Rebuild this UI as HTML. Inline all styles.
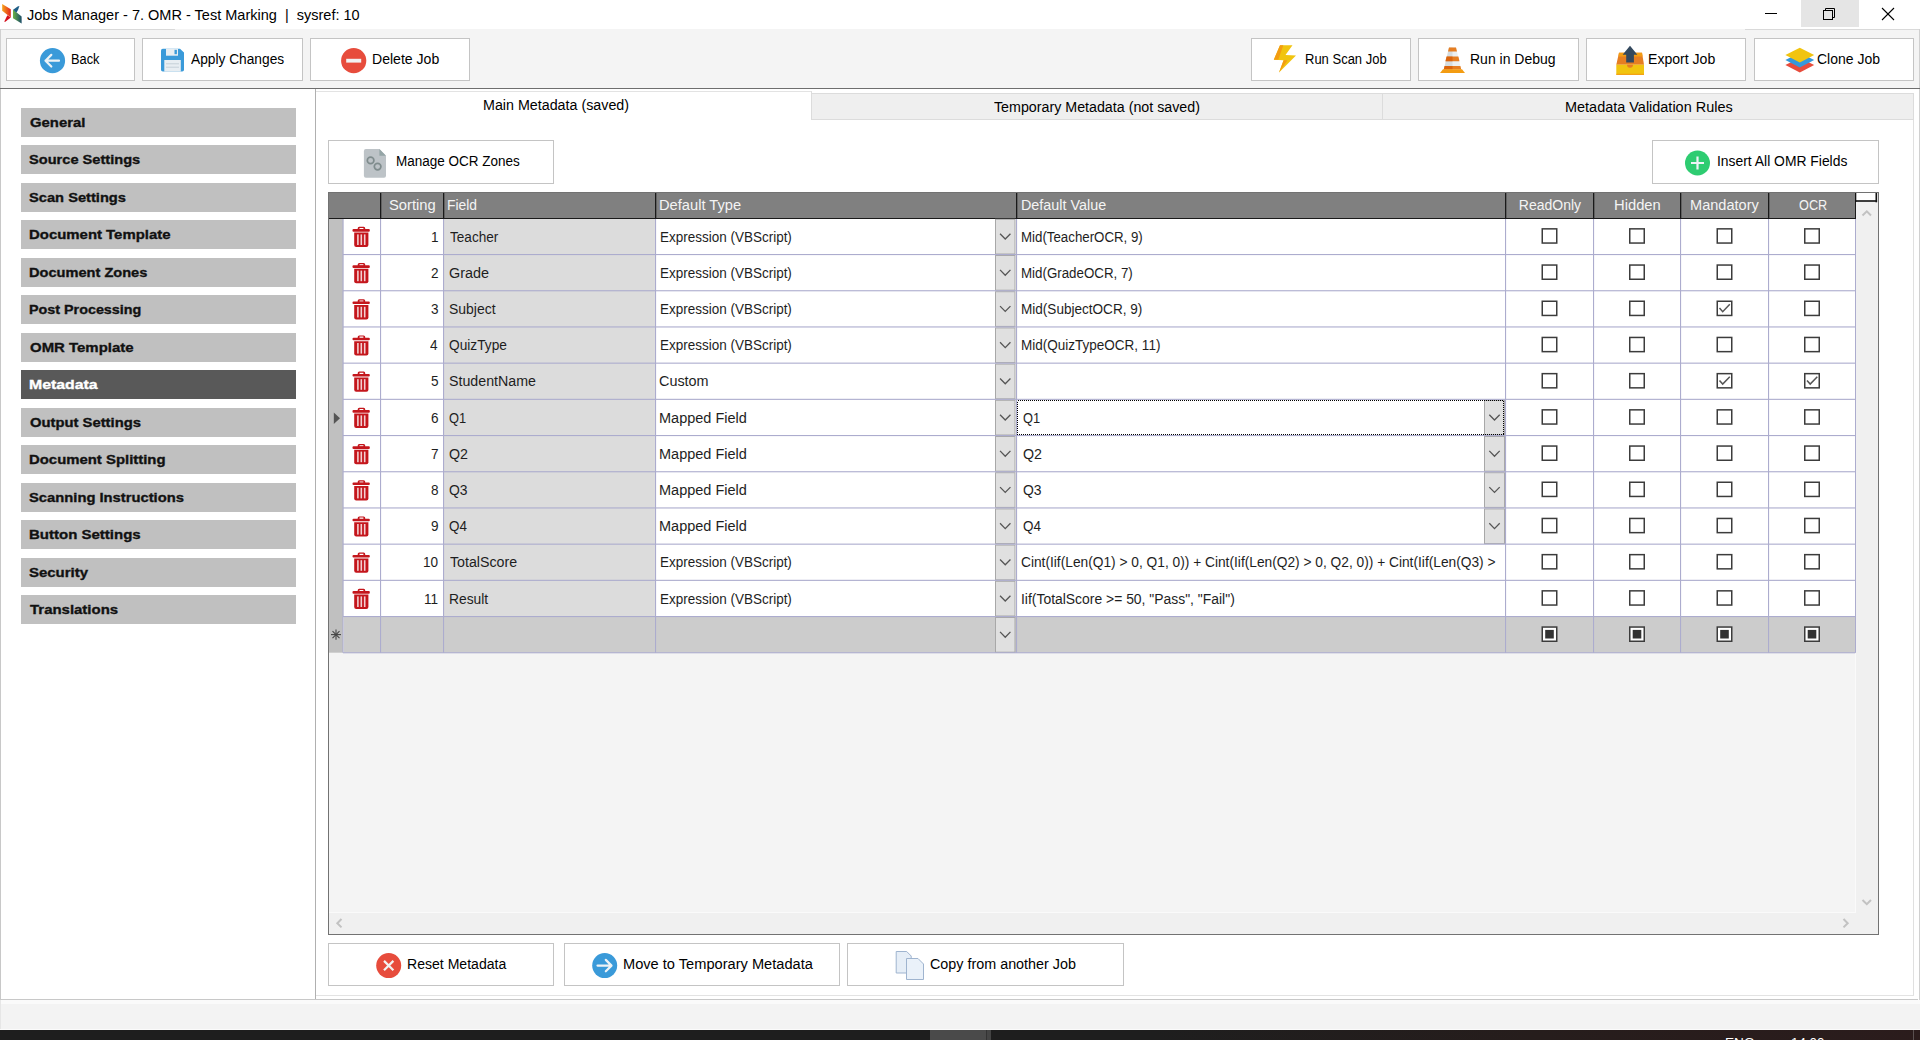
<!DOCTYPE html>
<html><head><meta charset="utf-8"><title>Jobs Manager</title>
<style>html,body{margin:0;padding:0;width:1920px;height:1040px;overflow:hidden;background:#fff;font-family:"Liberation Sans", sans-serif;}</style>
</head><body>
<div style="position:absolute;left:0px;top:0px;width:1920px;height:29px;background:#fff"></div>
<svg style="position:absolute;left:0;top:0" width="26" height="28" viewBox="0 0 26 28">
<defs><linearGradient id="lg1" x1="0" y1="0" x2="1" y2="0"><stop offset="0" stop-color="#f6a31c"/><stop offset="1" stop-color="#e3261f"/></linearGradient>
<linearGradient id="lg2" x1="0" y1="0" x2="1" y2="0"><stop offset="0" stop-color="#6cb246"/><stop offset="1" stop-color="#1b4d68"/></linearGradient></defs>
<polygon points="2.2,4 10.8,9.2 10.8,17.5 2.2,10.8" fill="url(#lg1)"/>
<polygon points="7.4,15.2 10.8,17.5 5,22 4.3,21.4" fill="#d40f1c"/>
<polygon points="13,9.5 21.6,16.4 21.6,23.6 13,18.3" fill="url(#lg2)"/>
<polygon points="13.2,9.8 17.6,6.4 19.4,6 18.2,9.5 16.6,12.6 14.8,11.2" fill="#1e5d86"/>
</svg>
<div style="position:absolute;left:1801px;top:0px;width:58px;height:27px;background:#e5e5e5"></div>
<svg style="position:absolute;left:1740px;top:0" width="180" height="28" viewBox="0 0 180 28">
<line x1="25" y1="13.5" x2="37" y2="13.5" stroke="#000" stroke-width="1"/>
<rect x="83.5" y="10.5" width="9" height="9" fill="none" stroke="#000" stroke-width="1"/>
<polyline points="85.5,10.5 85.5,8.5 94.5,8.5 94.5,17.5 92.5,17.5" fill="none" stroke="#000" stroke-width="1"/>
<line x1="142" y1="8" x2="154" y2="20" stroke="#000" stroke-width="1.1"/>
<line x1="154" y1="8" x2="142" y2="20" stroke="#000" stroke-width="1.1"/>
</svg>
<div style="position:absolute;left:0px;top:29px;width:1920px;height:59px;background:#f4f4f4"></div>
<div style="position:absolute;left:0px;top:29px;width:175px;height:1px;background:#d9d9d9"></div>
<div style="position:absolute;left:1745px;top:29px;width:175px;height:1px;background:#d9d9d9"></div>
<div style="position:absolute;left:0px;top:29px;width:1px;height:59px;background:#d0d0d0"></div>
<div style="position:absolute;left:1919px;top:29px;width:1px;height:59px;background:#d0d0d0"></div>
<div style="position:absolute;left:0px;top:88px;width:1920px;height:1px;background:#6e6e6e"></div>
<div style="position:absolute;left:6px;top:38px;width:129px;height:43px;background:#fff;border:1px solid #c4c4c4;box-sizing:border-box"></div>
<div style="position:absolute;left:142px;top:38px;width:161px;height:43px;background:#fff;border:1px solid #c4c4c4;box-sizing:border-box"></div>
<div style="position:absolute;left:310px;top:38px;width:160px;height:43px;background:#fff;border:1px solid #c4c4c4;box-sizing:border-box"></div>
<div style="position:absolute;left:1251px;top:38px;width:160px;height:43px;background:#fff;border:1px solid #c4c4c4;box-sizing:border-box"></div>
<div style="position:absolute;left:1418px;top:38px;width:161px;height:43px;background:#fff;border:1px solid #c4c4c4;box-sizing:border-box"></div>
<div style="position:absolute;left:1586px;top:38px;width:160px;height:43px;background:#fff;border:1px solid #c4c4c4;box-sizing:border-box"></div>
<div style="position:absolute;left:1754px;top:38px;width:160px;height:43px;background:#fff;border:1px solid #c4c4c4;box-sizing:border-box"></div>

<svg style="position:absolute;left:0;top:0" width="1920" height="1040" viewBox="0 0 1920 1040">
<!-- back -->
<circle cx="52.5" cy="60.7" r="12.6" fill="#3a9ad9"/>
<path d="M45.5,60.7 H59 M51.3,54.9 L45.5,60.7 L51.3,66.5" fill="none" stroke="#eef3f6" stroke-width="2.2" stroke-linecap="round" stroke-linejoin="round"/>
<!-- floppy -->
<path d="M161,50.5 a1.8,1.8 0 0 1 1.8,-1.8 H180 L184,52.5 V69.8 a1.8,1.8 0 0 1 -1.8,1.8 H162.8 a1.8,1.8 0 0 1 -1.8,-1.8 Z" fill="#3a9ad9"/>
<rect x="166" y="48.7" width="12" height="7" fill="#e8eef2"/>
<rect x="174.5" y="49.8" width="2.4" height="4.4" fill="#3a9ad9"/>
<rect x="164.3" y="60" width="16.5" height="11.6" fill="#e8eef2"/>
<line x1="166" y1="63.8" x2="179" y2="63.8" stroke="#c5d0d8" stroke-width="1"/>
<line x1="166" y1="67.2" x2="179" y2="67.2" stroke="#c5d0d8" stroke-width="1"/>
<!-- delete -->
<circle cx="353.7" cy="60.7" r="12.6" fill="#e74c3c"/>
<rect x="346.2" y="58.8" width="15" height="3.8" fill="#f2f2f2"/>
<!-- lightning -->
<polygon points="1280,45.2 1292.5,45.2 1285.5,54.9 1296,55.4 1279,72.5 1283.6,60.2 1273.8,59.8" fill="#f1c40f"/>
<polygon points="1280,45.2 1283.3,45.2 1278.3,59.8 1273.8,59.8" fill="#f39c12"/>
<polygon points="1283.6,60.2 1287.5,60.2 1279,72.5" fill="#f39c12"/>
<!-- cone -->
<polygon points="1449,47.5 1456,47.5 1461.2,69.5 1443.8,69.5" fill="#ecf0f1"/>
<polygon points="1449,47.5 1452.5,47.5 1452.5,69.5 1443.8,69.5" fill="#bdc3c7" opacity="0.45"/>
<polygon points="1449,47.5 1456,47.5 1457,51.5 1448,51.5" fill="#e67e22"/>
<polygon points="1446.6,56.6 1458.4,56.6 1459.5,61.3 1445.5,61.3" fill="#e67e22"/>
<polygon points="1444.6,66 1460.4,66 1461.2,69.5 1443.8,69.5" fill="#e67e22"/>
<polygon points="1446.6,56.6 1452.5,56.6 1452.5,61.3 1445.5,61.3" fill="#d35400" opacity="0.6"/>
<polygon points="1444.6,66 1452.5,66 1452.5,69.5 1443.8,69.5" fill="#d35400" opacity="0.6"/>
<polygon points="1443,69.3 1462,69.3 1465,73 1440,73" fill="#f39c12"/>
<!-- export -->
<polygon points="1619,52.8 1642,52.8 1644,64.7 1616.3,64.7" fill="#e67e22"/>
<polygon points="1619,52.8 1642,52.8 1642.5,56.5 1618.5,56.5" fill="#f39c12"/>
<rect x="1616.3" y="64.7" width="27.7" height="10.1" fill="#f1c40f"/>
<path d="M1627,64.7 a3,3 0 0 0 6,0 Z" fill="#e67e22"/>
<rect x="1616.3" y="73.8" width="27.7" height="1.1" fill="#f39c12"/>
<polygon points="1630,45.8 1637.4,54.7 1633.9,54.7 1633.9,62.5 1626.2,62.5 1626.2,54.7 1622.6,54.7" fill="#34495e"/>
<!-- clone -->
<polygon points="1785.4,65 1799.8,57.7 1814.2,65 1799.8,72.6" fill="#e74c3c"/>
<polygon points="1785.4,60 1799.8,52.7 1814.2,60 1799.8,67.5" fill="#3498db"/>
<polygon points="1785.4,55.1 1799.8,47.7 1814.2,55.1 1799.8,62.5" fill="#f1c40f"/>
</svg>
<div style="position:absolute;left:0px;top:89px;width:316px;height:911px;background:#fff"></div>
<div style="position:absolute;left:0px;top:89px;width:1px;height:911px;background:#c8c8c8"></div>
<div style="position:absolute;left:315px;top:89px;width:1px;height:911px;background:#b0b0b0"></div>
<div style="position:absolute;left:316px;top:89px;width:1604px;height:911px;background:#fff"></div>
<div style="position:absolute;left:1919px;top:89px;width:1px;height:911px;background:#d0d0d0"></div>
<div style="position:absolute;left:21px;top:108px;width:275px;height:29px;background:#c0c0c0"></div>
<div style="position:absolute;left:21px;top:145px;width:275px;height:29px;background:#c0c0c0"></div>
<div style="position:absolute;left:21px;top:183px;width:275px;height:29px;background:#c0c0c0"></div>
<div style="position:absolute;left:21px;top:220px;width:275px;height:29px;background:#c0c0c0"></div>
<div style="position:absolute;left:21px;top:258px;width:275px;height:29px;background:#c0c0c0"></div>
<div style="position:absolute;left:21px;top:295px;width:275px;height:29px;background:#c0c0c0"></div>
<div style="position:absolute;left:21px;top:333px;width:275px;height:29px;background:#c0c0c0"></div>
<div style="position:absolute;left:21px;top:370px;width:275px;height:29px;background:#595959"></div>
<div style="position:absolute;left:21px;top:408px;width:275px;height:29px;background:#c0c0c0"></div>
<div style="position:absolute;left:21px;top:445px;width:275px;height:29px;background:#c0c0c0"></div>
<div style="position:absolute;left:21px;top:483px;width:275px;height:29px;background:#c0c0c0"></div>
<div style="position:absolute;left:21px;top:520px;width:275px;height:29px;background:#c0c0c0"></div>
<div style="position:absolute;left:21px;top:558px;width:275px;height:29px;background:#c0c0c0"></div>
<div style="position:absolute;left:21px;top:595px;width:275px;height:29px;background:#c0c0c0"></div>
<div style="position:absolute;left:316px;top:91px;width:496px;height:29px;background:#fff;border-top:1px solid #e3e3e3;border-right:1px solid #dcdcdc;box-sizing:border-box"></div>
<div style="position:absolute;left:811px;top:93px;width:1103px;height:27px;background:#efefef;border:1px solid #dcdcdc;border-right:none;box-sizing:border-box"></div>
<div style="position:absolute;left:1382px;top:93px;width:1px;height:27px;background:#dcdcdc"></div>
<div style="position:absolute;left:1913px;top:93px;width:1px;height:27px;background:#dcdcdc"></div>
<div style="position:absolute;left:1913px;top:120px;width:1px;height:876px;background:#e0e0e0"></div>
<div style="position:absolute;left:316px;top:995px;width:1598px;height:1px;background:#e3e3e3"></div>
<div style="position:absolute;left:0px;top:999px;width:1918px;height:1px;background:#c8c8c8"></div>
<div style="position:absolute;left:0px;top:1000px;width:1920px;height:30px;background:#f3f3f3"></div>
<div style="position:absolute;left:0px;top:1000px;width:1920px;height:4px;background:#fafafa"></div>
<div style="position:absolute;left:0px;top:1000px;width:1px;height:30px;background:#e6e6e6"></div>
<div style="position:absolute;left:0px;top:1029px;width:1920px;height:1px;background:#fbfbfb"></div>
<div style="position:absolute;left:0px;top:1030px;width:1920px;height:10px;background:linear-gradient(90deg,#1e1e1e 0%,#1e1e1e 60%,#261d1c 80%,#2b1c1c 100%)"></div>
<div style="position:absolute;left:1913px;top:1030px;width:1px;height:10px;background:#5a5050"></div>
<div style="position:absolute;left:930px;top:1030px;width:56px;height:10px;background:#4a4a4a"></div>
<div style="position:absolute;left:986px;top:1030px;width:1px;height:10px;background:#333"></div>
<div style="position:absolute;left:987px;top:1030px;width:4px;height:10px;background:#444"></div>
<div style="position:absolute;left:328px;top:140px;width:226px;height:44px;background:#fff;border:1px solid #c4c4c4;box-sizing:border-box"></div>
<div style="position:absolute;left:1652px;top:140px;width:227px;height:44px;background:#fff;border:1px solid #c4c4c4;box-sizing:border-box"></div>
<div style="position:absolute;left:328px;top:943px;width:226px;height:43px;background:#fff;border:1px solid #c4c4c4;box-sizing:border-box"></div>
<div style="position:absolute;left:564px;top:943px;width:276px;height:43px;background:#fff;border:1px solid #c4c4c4;box-sizing:border-box"></div>
<div style="position:absolute;left:847px;top:943px;width:277px;height:43px;background:#fff;border:1px solid #c4c4c4;box-sizing:border-box"></div>
<div style="position:absolute;left:328px;top:192px;width:1550px;height:742px;background:#f4f4f4"></div>
<svg style="position:absolute;left:0;top:0" width="1920" height="1040" viewBox="0 0 1920 1040">
<rect x="344" y="219" width="1511" height="397.5" fill="#fff"/>
<rect x="444" y="219" width="211" height="397.5" fill="#dcdcdc"/>
<rect x="329" y="219" width="14" height="433.70000000000005" fill="#c0c0c0"/>
<rect x="344" y="616.5" width="1511.5" height="36.2" fill="#cccccc"/>
<rect x="329" y="193" width="1527" height="25" fill="#808080"/>
<rect x="329" y="218" width="1527" height="1" fill="#1a1a1a"/>
<rect x="380.0" y="193" width="1.3" height="25" fill="#1a1a1a"/>
<rect x="443.0" y="193" width="1.3" height="25" fill="#1a1a1a"/>
<rect x="655.0" y="193" width="1.3" height="25" fill="#1a1a1a"/>
<rect x="1016.0" y="193" width="1.3" height="25" fill="#1a1a1a"/>
<rect x="1505.0" y="193" width="1.3" height="25" fill="#1a1a1a"/>
<rect x="1593.0" y="193" width="1.3" height="25" fill="#1a1a1a"/>
<rect x="1680.0" y="193" width="1.3" height="25" fill="#1a1a1a"/>
<rect x="1768.0" y="193" width="1.3" height="25" fill="#1a1a1a"/>
<rect x="1855.0" y="193" width="1.3" height="25" fill="#1a1a1a"/>
<rect x="995.5" y="219.3" width="19.5" height="34.7" fill="#e0e0e0" stroke="#a8a8a8" stroke-width="1"/>
<polyline points="1000.05,233.70000000000002 1005.25,239.0 1010.45,233.70000000000002" fill="none" stroke="#555" stroke-width="1.3"/>
<rect x="995.5" y="255.5" width="19.5" height="34.7" fill="#e0e0e0" stroke="#a8a8a8" stroke-width="1"/>
<polyline points="1000.05,269.90000000000003 1005.25,275.20000000000005 1010.45,269.90000000000003" fill="none" stroke="#555" stroke-width="1.3"/>
<rect x="995.5" y="291.70000000000005" width="19.5" height="34.7" fill="#e0e0e0" stroke="#a8a8a8" stroke-width="1"/>
<polyline points="1000.05,306.1000000000001 1005.25,311.4000000000001 1010.45,306.1000000000001" fill="none" stroke="#555" stroke-width="1.3"/>
<rect x="995.5" y="327.90000000000003" width="19.5" height="34.7" fill="#e0e0e0" stroke="#a8a8a8" stroke-width="1"/>
<polyline points="1000.05,342.30000000000007 1005.25,347.6000000000001 1010.45,342.30000000000007" fill="none" stroke="#555" stroke-width="1.3"/>
<rect x="995.5" y="364.1" width="19.5" height="34.7" fill="#e0e0e0" stroke="#a8a8a8" stroke-width="1"/>
<polyline points="1000.05,378.50000000000006 1005.25,383.80000000000007 1010.45,378.50000000000006" fill="none" stroke="#555" stroke-width="1.3"/>
<rect x="995.5" y="400.3" width="19.5" height="34.7" fill="#e0e0e0" stroke="#a8a8a8" stroke-width="1"/>
<polyline points="1000.05,414.70000000000005 1005.25,420.00000000000006 1010.45,414.70000000000005" fill="none" stroke="#555" stroke-width="1.3"/>
<rect x="1484.5" y="400.3" width="20.0" height="34.7" fill="#e0e0e0" stroke="#a8a8a8" stroke-width="1"/>
<polyline points="1489.3,414.70000000000005 1494.5,420.00000000000006 1499.7,414.70000000000005" fill="none" stroke="#555" stroke-width="1.3"/>
<rect x="995.5" y="436.5" width="19.5" height="34.7" fill="#e0e0e0" stroke="#a8a8a8" stroke-width="1"/>
<polyline points="1000.05,450.90000000000003 1005.25,456.20000000000005 1010.45,450.90000000000003" fill="none" stroke="#555" stroke-width="1.3"/>
<rect x="1484.5" y="436.5" width="20.0" height="34.7" fill="#e0e0e0" stroke="#a8a8a8" stroke-width="1"/>
<polyline points="1489.3,450.90000000000003 1494.5,456.20000000000005 1499.7,450.90000000000003" fill="none" stroke="#555" stroke-width="1.3"/>
<rect x="995.5" y="472.70000000000005" width="19.5" height="34.7" fill="#e0e0e0" stroke="#a8a8a8" stroke-width="1"/>
<polyline points="1000.05,487.1000000000001 1005.25,492.4000000000001 1010.45,487.1000000000001" fill="none" stroke="#555" stroke-width="1.3"/>
<rect x="1484.5" y="472.70000000000005" width="20.0" height="34.7" fill="#e0e0e0" stroke="#a8a8a8" stroke-width="1"/>
<polyline points="1489.3,487.1000000000001 1494.5,492.4000000000001 1499.7,487.1000000000001" fill="none" stroke="#555" stroke-width="1.3"/>
<rect x="995.5" y="508.90000000000003" width="19.5" height="34.7" fill="#e0e0e0" stroke="#a8a8a8" stroke-width="1"/>
<polyline points="1000.05,523.3 1005.25,528.6 1010.45,523.3" fill="none" stroke="#555" stroke-width="1.3"/>
<rect x="1484.5" y="508.90000000000003" width="20.0" height="34.7" fill="#e0e0e0" stroke="#a8a8a8" stroke-width="1"/>
<polyline points="1489.3,523.3 1494.5,528.6 1499.7,523.3" fill="none" stroke="#555" stroke-width="1.3"/>
<rect x="995.5" y="545.1" width="19.5" height="34.7" fill="#e0e0e0" stroke="#a8a8a8" stroke-width="1"/>
<polyline points="1000.05,559.5 1005.25,564.8000000000001 1010.45,559.5" fill="none" stroke="#555" stroke-width="1.3"/>
<rect x="995.5" y="581.3" width="19.5" height="34.7" fill="#e0e0e0" stroke="#a8a8a8" stroke-width="1"/>
<polyline points="1000.05,595.6999999999999 1005.25,601.0 1010.45,595.6999999999999" fill="none" stroke="#555" stroke-width="1.3"/>
<rect x="995.5" y="617.5" width="19.5" height="34.7" fill="#e0e0e0" stroke="#a8a8a8" stroke-width="1"/>
<polyline points="1000.05,631.9 1005.25,637.2 1010.45,631.9" fill="none" stroke="#555" stroke-width="1.3"/>
<rect x="343" y="254.0" width="1512.5" height="1.1" fill="#acacce"/>
<rect x="343" y="290.20000000000005" width="1512.5" height="1.1" fill="#acacce"/>
<rect x="343" y="326.40000000000003" width="1512.5" height="1.1" fill="#acacce"/>
<rect x="343" y="362.6" width="1512.5" height="1.1" fill="#acacce"/>
<rect x="343" y="398.8" width="1512.5" height="1.1" fill="#acacce"/>
<rect x="343" y="435.0" width="1512.5" height="1.1" fill="#acacce"/>
<rect x="343" y="471.20000000000005" width="1512.5" height="1.1" fill="#acacce"/>
<rect x="343" y="507.40000000000003" width="1512.5" height="1.1" fill="#acacce"/>
<rect x="343" y="543.6" width="1512.5" height="1.1" fill="#acacce"/>
<rect x="343" y="579.8" width="1512.5" height="1.1" fill="#acacce"/>
<rect x="343" y="616.0" width="1512.5" height="1.1" fill="#acacce"/>
<rect x="343" y="652.2" width="1512.5" height="1.1" fill="#acacce"/>
<rect x="342.5" y="219" width="1.1" height="433.70000000000005" fill="#acacce"/>
<rect x="380.0" y="219" width="1.1" height="433.70000000000005" fill="#acacce"/>
<rect x="443.0" y="219" width="1.1" height="433.70000000000005" fill="#acacce"/>
<rect x="655.0" y="219" width="1.1" height="433.70000000000005" fill="#acacce"/>
<rect x="1016.0" y="219" width="1.1" height="433.70000000000005" fill="#acacce"/>
<rect x="1505.0" y="219" width="1.1" height="433.70000000000005" fill="#acacce"/>
<rect x="1593.0" y="219" width="1.1" height="433.70000000000005" fill="#acacce"/>
<rect x="1680.0" y="219" width="1.1" height="433.70000000000005" fill="#acacce"/>
<rect x="1768.0" y="219" width="1.1" height="433.70000000000005" fill="#acacce"/>
<rect x="1855.0" y="219" width="1.1" height="433.70000000000005" fill="#acacce"/>
<rect x="1542.25" y="228.85" width="14.5" height="14.2" fill="#fff" stroke="#3c3c3c" stroke-width="1.5"/>
<rect x="1629.75" y="228.85" width="14.5" height="14.2" fill="#fff" stroke="#3c3c3c" stroke-width="1.5"/>
<rect x="1717.25" y="228.85" width="14.5" height="14.2" fill="#fff" stroke="#3c3c3c" stroke-width="1.5"/>
<rect x="1804.75" y="228.85" width="14.5" height="14.2" fill="#fff" stroke="#3c3c3c" stroke-width="1.5"/>
<rect x="1542.25" y="265.05" width="14.5" height="14.2" fill="#fff" stroke="#3c3c3c" stroke-width="1.5"/>
<rect x="1629.75" y="265.05" width="14.5" height="14.2" fill="#fff" stroke="#3c3c3c" stroke-width="1.5"/>
<rect x="1717.25" y="265.05" width="14.5" height="14.2" fill="#fff" stroke="#3c3c3c" stroke-width="1.5"/>
<rect x="1804.75" y="265.05" width="14.5" height="14.2" fill="#fff" stroke="#3c3c3c" stroke-width="1.5"/>
<rect x="1542.25" y="301.25000000000006" width="14.5" height="14.2" fill="#fff" stroke="#3c3c3c" stroke-width="1.5"/>
<rect x="1629.75" y="301.25000000000006" width="14.5" height="14.2" fill="#fff" stroke="#3c3c3c" stroke-width="1.5"/>
<rect x="1717.25" y="301.25000000000006" width="14.5" height="14.2" fill="#fff" stroke="#3c3c3c" stroke-width="1.5"/>
<polyline points="1719.5,308.00000000000006 1722.7,311.70000000000005 1729.8,304.30000000000007" fill="none" stroke="#555" stroke-width="1.5"/>
<rect x="1804.75" y="301.25000000000006" width="14.5" height="14.2" fill="#fff" stroke="#3c3c3c" stroke-width="1.5"/>
<rect x="1542.25" y="337.45000000000005" width="14.5" height="14.2" fill="#fff" stroke="#3c3c3c" stroke-width="1.5"/>
<rect x="1629.75" y="337.45000000000005" width="14.5" height="14.2" fill="#fff" stroke="#3c3c3c" stroke-width="1.5"/>
<rect x="1717.25" y="337.45000000000005" width="14.5" height="14.2" fill="#fff" stroke="#3c3c3c" stroke-width="1.5"/>
<rect x="1804.75" y="337.45000000000005" width="14.5" height="14.2" fill="#fff" stroke="#3c3c3c" stroke-width="1.5"/>
<rect x="1542.25" y="373.65000000000003" width="14.5" height="14.2" fill="#fff" stroke="#3c3c3c" stroke-width="1.5"/>
<rect x="1629.75" y="373.65000000000003" width="14.5" height="14.2" fill="#fff" stroke="#3c3c3c" stroke-width="1.5"/>
<rect x="1717.25" y="373.65000000000003" width="14.5" height="14.2" fill="#fff" stroke="#3c3c3c" stroke-width="1.5"/>
<polyline points="1719.5,380.40000000000003 1722.7,384.1 1729.8,376.70000000000005" fill="none" stroke="#555" stroke-width="1.5"/>
<rect x="1804.75" y="373.65000000000003" width="14.5" height="14.2" fill="#fff" stroke="#3c3c3c" stroke-width="1.5"/>
<polyline points="1807.0,380.40000000000003 1810.2,384.1 1817.3,376.70000000000005" fill="none" stroke="#555" stroke-width="1.5"/>
<rect x="1542.25" y="409.85" width="14.5" height="14.2" fill="#fff" stroke="#3c3c3c" stroke-width="1.5"/>
<rect x="1629.75" y="409.85" width="14.5" height="14.2" fill="#fff" stroke="#3c3c3c" stroke-width="1.5"/>
<rect x="1717.25" y="409.85" width="14.5" height="14.2" fill="#fff" stroke="#3c3c3c" stroke-width="1.5"/>
<rect x="1804.75" y="409.85" width="14.5" height="14.2" fill="#fff" stroke="#3c3c3c" stroke-width="1.5"/>
<rect x="1542.25" y="446.05" width="14.5" height="14.2" fill="#fff" stroke="#3c3c3c" stroke-width="1.5"/>
<rect x="1629.75" y="446.05" width="14.5" height="14.2" fill="#fff" stroke="#3c3c3c" stroke-width="1.5"/>
<rect x="1717.25" y="446.05" width="14.5" height="14.2" fill="#fff" stroke="#3c3c3c" stroke-width="1.5"/>
<rect x="1804.75" y="446.05" width="14.5" height="14.2" fill="#fff" stroke="#3c3c3c" stroke-width="1.5"/>
<rect x="1542.25" y="482.25000000000006" width="14.5" height="14.2" fill="#fff" stroke="#3c3c3c" stroke-width="1.5"/>
<rect x="1629.75" y="482.25000000000006" width="14.5" height="14.2" fill="#fff" stroke="#3c3c3c" stroke-width="1.5"/>
<rect x="1717.25" y="482.25000000000006" width="14.5" height="14.2" fill="#fff" stroke="#3c3c3c" stroke-width="1.5"/>
<rect x="1804.75" y="482.25000000000006" width="14.5" height="14.2" fill="#fff" stroke="#3c3c3c" stroke-width="1.5"/>
<rect x="1542.25" y="518.45" width="14.5" height="14.2" fill="#fff" stroke="#3c3c3c" stroke-width="1.5"/>
<rect x="1629.75" y="518.45" width="14.5" height="14.2" fill="#fff" stroke="#3c3c3c" stroke-width="1.5"/>
<rect x="1717.25" y="518.45" width="14.5" height="14.2" fill="#fff" stroke="#3c3c3c" stroke-width="1.5"/>
<rect x="1804.75" y="518.45" width="14.5" height="14.2" fill="#fff" stroke="#3c3c3c" stroke-width="1.5"/>
<rect x="1542.25" y="554.6500000000001" width="14.5" height="14.2" fill="#fff" stroke="#3c3c3c" stroke-width="1.5"/>
<rect x="1629.75" y="554.6500000000001" width="14.5" height="14.2" fill="#fff" stroke="#3c3c3c" stroke-width="1.5"/>
<rect x="1717.25" y="554.6500000000001" width="14.5" height="14.2" fill="#fff" stroke="#3c3c3c" stroke-width="1.5"/>
<rect x="1804.75" y="554.6500000000001" width="14.5" height="14.2" fill="#fff" stroke="#3c3c3c" stroke-width="1.5"/>
<rect x="1542.25" y="590.85" width="14.5" height="14.2" fill="#fff" stroke="#3c3c3c" stroke-width="1.5"/>
<rect x="1629.75" y="590.85" width="14.5" height="14.2" fill="#fff" stroke="#3c3c3c" stroke-width="1.5"/>
<rect x="1717.25" y="590.85" width="14.5" height="14.2" fill="#fff" stroke="#3c3c3c" stroke-width="1.5"/>
<rect x="1804.75" y="590.85" width="14.5" height="14.2" fill="#fff" stroke="#3c3c3c" stroke-width="1.5"/>
<rect x="1542.25" y="627.0500000000001" width="14.5" height="14.2" fill="#fff" stroke="#3c3c3c" stroke-width="1.5"/>
<rect x="1545.2" y="629.9" width="8.6" height="8.6" fill="#333"/>
<rect x="1629.75" y="627.0500000000001" width="14.5" height="14.2" fill="#fff" stroke="#3c3c3c" stroke-width="1.5"/>
<rect x="1632.7" y="629.9" width="8.6" height="8.6" fill="#333"/>
<rect x="1717.25" y="627.0500000000001" width="14.5" height="14.2" fill="#fff" stroke="#3c3c3c" stroke-width="1.5"/>
<rect x="1720.2" y="629.9" width="8.6" height="8.6" fill="#333"/>
<rect x="1804.75" y="627.0500000000001" width="14.5" height="14.2" fill="#fff" stroke="#3c3c3c" stroke-width="1.5"/>
<rect x="1807.7" y="629.9" width="8.6" height="8.6" fill="#333"/>
<g transform="translate(352.5,226.8)" fill="#c4161c"><path fill-rule="evenodd" d="M5.2,1.5 a1.5,1.5 0 0 1 1.5,-1.5 h4.5 a1.5,1.5 0 0 1 1.5,1.5 v1.5 h-7.5 z M7,1.2 h3.9 v1.4 h-3.9 z"/><rect x="0" y="2.3" width="17.3" height="2.6" rx="1"/><path d="M1.7,5.8 H15.9 V18.2 a2,2 0 0 1 -2,2 H3.7 a2,2 0 0 1 -2,-2 Z"/><rect x="4.6" y="7.6" width="1.6" height="10.6" fill="#f3d0d1"/><rect x="8" y="7.6" width="1.6" height="10.6" fill="#f3d0d1"/><rect x="11.4" y="7.6" width="1.6" height="10.6" fill="#f3d0d1"/></g>
<g transform="translate(352.5,263.0)" fill="#c4161c"><path fill-rule="evenodd" d="M5.2,1.5 a1.5,1.5 0 0 1 1.5,-1.5 h4.5 a1.5,1.5 0 0 1 1.5,1.5 v1.5 h-7.5 z M7,1.2 h3.9 v1.4 h-3.9 z"/><rect x="0" y="2.3" width="17.3" height="2.6" rx="1"/><path d="M1.7,5.8 H15.9 V18.2 a2,2 0 0 1 -2,2 H3.7 a2,2 0 0 1 -2,-2 Z"/><rect x="4.6" y="7.6" width="1.6" height="10.6" fill="#f3d0d1"/><rect x="8" y="7.6" width="1.6" height="10.6" fill="#f3d0d1"/><rect x="11.4" y="7.6" width="1.6" height="10.6" fill="#f3d0d1"/></g>
<g transform="translate(352.5,299.20000000000005)" fill="#c4161c"><path fill-rule="evenodd" d="M5.2,1.5 a1.5,1.5 0 0 1 1.5,-1.5 h4.5 a1.5,1.5 0 0 1 1.5,1.5 v1.5 h-7.5 z M7,1.2 h3.9 v1.4 h-3.9 z"/><rect x="0" y="2.3" width="17.3" height="2.6" rx="1"/><path d="M1.7,5.8 H15.9 V18.2 a2,2 0 0 1 -2,2 H3.7 a2,2 0 0 1 -2,-2 Z"/><rect x="4.6" y="7.6" width="1.6" height="10.6" fill="#f3d0d1"/><rect x="8" y="7.6" width="1.6" height="10.6" fill="#f3d0d1"/><rect x="11.4" y="7.6" width="1.6" height="10.6" fill="#f3d0d1"/></g>
<g transform="translate(352.5,335.40000000000003)" fill="#c4161c"><path fill-rule="evenodd" d="M5.2,1.5 a1.5,1.5 0 0 1 1.5,-1.5 h4.5 a1.5,1.5 0 0 1 1.5,1.5 v1.5 h-7.5 z M7,1.2 h3.9 v1.4 h-3.9 z"/><rect x="0" y="2.3" width="17.3" height="2.6" rx="1"/><path d="M1.7,5.8 H15.9 V18.2 a2,2 0 0 1 -2,2 H3.7 a2,2 0 0 1 -2,-2 Z"/><rect x="4.6" y="7.6" width="1.6" height="10.6" fill="#f3d0d1"/><rect x="8" y="7.6" width="1.6" height="10.6" fill="#f3d0d1"/><rect x="11.4" y="7.6" width="1.6" height="10.6" fill="#f3d0d1"/></g>
<g transform="translate(352.5,371.6)" fill="#c4161c"><path fill-rule="evenodd" d="M5.2,1.5 a1.5,1.5 0 0 1 1.5,-1.5 h4.5 a1.5,1.5 0 0 1 1.5,1.5 v1.5 h-7.5 z M7,1.2 h3.9 v1.4 h-3.9 z"/><rect x="0" y="2.3" width="17.3" height="2.6" rx="1"/><path d="M1.7,5.8 H15.9 V18.2 a2,2 0 0 1 -2,2 H3.7 a2,2 0 0 1 -2,-2 Z"/><rect x="4.6" y="7.6" width="1.6" height="10.6" fill="#f3d0d1"/><rect x="8" y="7.6" width="1.6" height="10.6" fill="#f3d0d1"/><rect x="11.4" y="7.6" width="1.6" height="10.6" fill="#f3d0d1"/></g>
<g transform="translate(352.5,407.8)" fill="#c4161c"><path fill-rule="evenodd" d="M5.2,1.5 a1.5,1.5 0 0 1 1.5,-1.5 h4.5 a1.5,1.5 0 0 1 1.5,1.5 v1.5 h-7.5 z M7,1.2 h3.9 v1.4 h-3.9 z"/><rect x="0" y="2.3" width="17.3" height="2.6" rx="1"/><path d="M1.7,5.8 H15.9 V18.2 a2,2 0 0 1 -2,2 H3.7 a2,2 0 0 1 -2,-2 Z"/><rect x="4.6" y="7.6" width="1.6" height="10.6" fill="#f3d0d1"/><rect x="8" y="7.6" width="1.6" height="10.6" fill="#f3d0d1"/><rect x="11.4" y="7.6" width="1.6" height="10.6" fill="#f3d0d1"/></g>
<g transform="translate(352.5,444.0)" fill="#c4161c"><path fill-rule="evenodd" d="M5.2,1.5 a1.5,1.5 0 0 1 1.5,-1.5 h4.5 a1.5,1.5 0 0 1 1.5,1.5 v1.5 h-7.5 z M7,1.2 h3.9 v1.4 h-3.9 z"/><rect x="0" y="2.3" width="17.3" height="2.6" rx="1"/><path d="M1.7,5.8 H15.9 V18.2 a2,2 0 0 1 -2,2 H3.7 a2,2 0 0 1 -2,-2 Z"/><rect x="4.6" y="7.6" width="1.6" height="10.6" fill="#f3d0d1"/><rect x="8" y="7.6" width="1.6" height="10.6" fill="#f3d0d1"/><rect x="11.4" y="7.6" width="1.6" height="10.6" fill="#f3d0d1"/></g>
<g transform="translate(352.5,480.20000000000005)" fill="#c4161c"><path fill-rule="evenodd" d="M5.2,1.5 a1.5,1.5 0 0 1 1.5,-1.5 h4.5 a1.5,1.5 0 0 1 1.5,1.5 v1.5 h-7.5 z M7,1.2 h3.9 v1.4 h-3.9 z"/><rect x="0" y="2.3" width="17.3" height="2.6" rx="1"/><path d="M1.7,5.8 H15.9 V18.2 a2,2 0 0 1 -2,2 H3.7 a2,2 0 0 1 -2,-2 Z"/><rect x="4.6" y="7.6" width="1.6" height="10.6" fill="#f3d0d1"/><rect x="8" y="7.6" width="1.6" height="10.6" fill="#f3d0d1"/><rect x="11.4" y="7.6" width="1.6" height="10.6" fill="#f3d0d1"/></g>
<g transform="translate(352.5,516.4)" fill="#c4161c"><path fill-rule="evenodd" d="M5.2,1.5 a1.5,1.5 0 0 1 1.5,-1.5 h4.5 a1.5,1.5 0 0 1 1.5,1.5 v1.5 h-7.5 z M7,1.2 h3.9 v1.4 h-3.9 z"/><rect x="0" y="2.3" width="17.3" height="2.6" rx="1"/><path d="M1.7,5.8 H15.9 V18.2 a2,2 0 0 1 -2,2 H3.7 a2,2 0 0 1 -2,-2 Z"/><rect x="4.6" y="7.6" width="1.6" height="10.6" fill="#f3d0d1"/><rect x="8" y="7.6" width="1.6" height="10.6" fill="#f3d0d1"/><rect x="11.4" y="7.6" width="1.6" height="10.6" fill="#f3d0d1"/></g>
<g transform="translate(352.5,552.6)" fill="#c4161c"><path fill-rule="evenodd" d="M5.2,1.5 a1.5,1.5 0 0 1 1.5,-1.5 h4.5 a1.5,1.5 0 0 1 1.5,1.5 v1.5 h-7.5 z M7,1.2 h3.9 v1.4 h-3.9 z"/><rect x="0" y="2.3" width="17.3" height="2.6" rx="1"/><path d="M1.7,5.8 H15.9 V18.2 a2,2 0 0 1 -2,2 H3.7 a2,2 0 0 1 -2,-2 Z"/><rect x="4.6" y="7.6" width="1.6" height="10.6" fill="#f3d0d1"/><rect x="8" y="7.6" width="1.6" height="10.6" fill="#f3d0d1"/><rect x="11.4" y="7.6" width="1.6" height="10.6" fill="#f3d0d1"/></g>
<g transform="translate(352.5,588.8)" fill="#c4161c"><path fill-rule="evenodd" d="M5.2,1.5 a1.5,1.5 0 0 1 1.5,-1.5 h4.5 a1.5,1.5 0 0 1 1.5,1.5 v1.5 h-7.5 z M7,1.2 h3.9 v1.4 h-3.9 z"/><rect x="0" y="2.3" width="17.3" height="2.6" rx="1"/><path d="M1.7,5.8 H15.9 V18.2 a2,2 0 0 1 -2,2 H3.7 a2,2 0 0 1 -2,-2 Z"/><rect x="4.6" y="7.6" width="1.6" height="10.6" fill="#f3d0d1"/><rect x="8" y="7.6" width="1.6" height="10.6" fill="#f3d0d1"/><rect x="11.4" y="7.6" width="1.6" height="10.6" fill="#f3d0d1"/></g>
<polygon points="333.8,412.40000000000003 340,418.20000000000005 333.8,424.00000000000006" fill="#555"/>
<g stroke="#444" stroke-width="1.1"><line x1="336" y1="629.4" x2="336" y2="639.8000000000001"/><line x1="331" y1="634.6" x2="341" y2="634.6"/><line x1="332.5" y1="631.1" x2="339.5" y2="638.1"/><line x1="339.5" y1="631.1" x2="332.5" y2="638.1"/></g>
<rect x="1017.5" y="400.5" width="486" height="34" fill="none" stroke="#000" stroke-width="1" stroke-dasharray="1,1" shape-rendering="crispEdges"/>
<rect x="1856" y="193" width="22" height="741" fill="#f0f0f0"/>
<rect x="329" y="913" width="1549" height="21" fill="#f0f0f0"/>
<rect x="329" y="912" width="1527" height="1" fill="#fafafa"/>
<rect x="1855" y="653.3000000000001" width="1" height="259.69999999999993" fill="#fafafa"/>
<rect x="1856" y="193" width="21" height="8" fill="#fff"/>
<rect x="1875.5" y="193" width="1.6" height="9.3" fill="#111"/>
<rect x="1855.3" y="200.2" width="21.8" height="1.6" fill="#111"/>
<rect x="1855" y="193" width="1.3" height="9" fill="#111"/>
<polyline points="1862.5,215.5 1866.8,211.3 1871,215.5" fill="none" stroke="#c2c2c2" stroke-width="2"/>
<polyline points="1862.5,900 1866.8,904.2 1871,900" fill="none" stroke="#c2c2c2" stroke-width="2"/>
<polyline points="341.5,919 337.3,923.2 341.5,927.4" fill="none" stroke="#c2c2c2" stroke-width="2"/>
<polyline points="1843.5,919 1847.7,923.2 1843.5,927.4" fill="none" stroke="#c2c2c2" stroke-width="2"/>
<rect x="328.5" y="192.5" width="1550" height="742" fill="none" stroke="#727272" stroke-width="1"/>

<path d="M363.9,151 a2,2 0 0 1 2,-2 h13.5 l6.6,6.8 v20 a2,2 0 0 1 -2,2 h-18.1 a2,2 0 0 1 -2,-2 z" fill="#bdc3c7"/>
<path d="M379.4,149 v6.8 h6.6 z" fill="#95a5a6"/>
<circle cx="370.6" cy="160.4" r="3.3" fill="none" stroke="#7f8c8d" stroke-width="1.7"/>
<circle cx="377.6" cy="166.6" r="3.3" fill="none" stroke="#7f8c8d" stroke-width="1.7"/>
<circle cx="1697.5" cy="163" r="12.5" fill="#2ecc71"/>
<path d="M1697.5,156.5 v13 M1691,163 h13" stroke="#eef3f6" stroke-width="2.2"/>
<circle cx="388.7" cy="965.6" r="12.5" fill="#e74c3c"/>
<path d="M384,960.9 l9.4,9.4 M393.4,960.9 l-9.4,9.4" stroke="#f2f2f2" stroke-width="2.2"/>
<circle cx="604.7" cy="965.6" r="12.5" fill="#3a9ad9"/>
<path d="M597.5,965.6 H611.5 M605.8,959.9 L611.5,965.6 L605.8,971.3" fill="none" stroke="#eef3f6" stroke-width="2.2" stroke-linecap="round" stroke-linejoin="round"/>
<path d="M896.2,951.5 h10.5 l4.5,4.5 v17 h-15 z" fill="#e6eef7" stroke="#9fb4cf" stroke-width="1"/>
<path d="M906.5,958.5 h11.5 l5.5,5.5 v15.5 h-17 z" fill="#eaf1f9" stroke="#9fb4cf" stroke-width="1"/>

</svg>
<div style="position:absolute;left:27.00px;top:7.30px;white-space:pre;font-size:15px;font-weight:400;line-height:1;color:#000;transform:scaleX(0.9679);transform-origin:0 0;">Jobs Manager - 7. OMR - Test Marking  |  sysref: 10</div>
<div style="position:absolute;left:70.78px;top:52.15px;white-space:pre;font-size:14px;font-weight:400;line-height:1;color:#000;transform:scaleX(0.9167);transform-origin:0 0;">Back</div>
<div style="position:absolute;left:191.40px;top:52.15px;white-space:pre;font-size:14px;font-weight:400;line-height:1;color:#000;transform:scaleX(0.9811);transform-origin:0 0;">Apply Changes</div>
<div style="position:absolute;left:372.00px;top:52.15px;white-space:pre;font-size:14px;font-weight:400;line-height:1;color:#000;transform:scaleX(1.0045);transform-origin:0 0;">Delete Job</div>
<div style="position:absolute;left:1304.57px;top:52.15px;white-space:pre;font-size:14px;font-weight:400;line-height:1;color:#000;transform:scaleX(0.9287);transform-origin:0 0;">Run Scan Job</div>
<div style="position:absolute;left:1470.30px;top:52.15px;white-space:pre;font-size:14px;font-weight:400;line-height:1;color:#000;transform:scaleX(0.9988);transform-origin:0 0;">Run in Debug</div>
<div style="position:absolute;left:1648.00px;top:52.15px;white-space:pre;font-size:14px;font-weight:400;line-height:1;color:#000;transform:scaleX(1.0045);transform-origin:0 0;">Export Job</div>
<div style="position:absolute;left:1817.40px;top:52.15px;white-space:pre;font-size:14px;font-weight:400;line-height:1;color:#000;transform:scaleX(0.9984);transform-origin:0 0;">Clone Job</div>
<div style="position:absolute;left:30.20px;top:116.07px;white-space:pre;font-size:13.5px;font-weight:700;line-height:1;color:#111;transform:scaleX(1.1000);transform-origin:0 0;-webkit-text-stroke:0.35px #111">General</div>
<div style="position:absolute;left:29.12px;top:153.07px;white-space:pre;font-size:13.5px;font-weight:700;line-height:1;color:#111;transform:scaleX(1.0822);transform-origin:0 0;-webkit-text-stroke:0.35px #111">Source Settings</div>
<div style="position:absolute;left:29.11px;top:191.07px;white-space:pre;font-size:13.5px;font-weight:700;line-height:1;color:#111;transform:scaleX(1.0864);transform-origin:0 0;-webkit-text-stroke:0.35px #111">Scan Settings</div>
<div style="position:absolute;left:29.09px;top:228.07px;white-space:pre;font-size:13.5px;font-weight:700;line-height:1;color:#111;transform:scaleX(1.1055);transform-origin:0 0;-webkit-text-stroke:0.35px #111">Document Template</div>
<div style="position:absolute;left:29.12px;top:266.07px;white-space:pre;font-size:13.5px;font-weight:700;line-height:1;color:#111;transform:scaleX(1.0806);transform-origin:0 0;-webkit-text-stroke:0.35px #111">Document Zones</div>
<div style="position:absolute;left:29.14px;top:303.07px;white-space:pre;font-size:13.5px;font-weight:700;line-height:1;color:#111;transform:scaleX(1.0615);transform-origin:0 0;-webkit-text-stroke:0.35px #111">Post Processing</div>
<div style="position:absolute;left:30.20px;top:341.07px;white-space:pre;font-size:13.5px;font-weight:700;line-height:1;color:#111;transform:scaleX(1.1075);transform-origin:0 0;-webkit-text-stroke:0.35px #111">OMR Template</div>
<div style="position:absolute;left:29.03px;top:378.07px;white-space:pre;font-size:13.5px;font-weight:700;line-height:1;color:#fff;transform:scaleX(1.1724);transform-origin:0 0;-webkit-text-stroke:0.35px #fff">Metadata</div>
<div style="position:absolute;left:30.20px;top:416.07px;white-space:pre;font-size:13.5px;font-weight:700;line-height:1;color:#111;transform:scaleX(1.0960);transform-origin:0 0;-webkit-text-stroke:0.35px #111">Output Settings</div>
<div style="position:absolute;left:29.10px;top:453.07px;white-space:pre;font-size:13.5px;font-weight:700;line-height:1;color:#111;transform:scaleX(1.1033);transform-origin:0 0;-webkit-text-stroke:0.35px #111">Document Splitting</div>
<div style="position:absolute;left:29.11px;top:491.07px;white-space:pre;font-size:13.5px;font-weight:700;line-height:1;color:#111;transform:scaleX(1.0929);transform-origin:0 0;-webkit-text-stroke:0.35px #111">Scanning Instructions</div>
<div style="position:absolute;left:29.09px;top:528.07px;white-space:pre;font-size:13.5px;font-weight:700;line-height:1;color:#111;transform:scaleX(1.1111);transform-origin:0 0;-webkit-text-stroke:0.35px #111">Button Settings</div>
<div style="position:absolute;left:29.09px;top:566.07px;white-space:pre;font-size:13.5px;font-weight:700;line-height:1;color:#111;transform:scaleX(1.1077);transform-origin:0 0;-webkit-text-stroke:0.35px #111">Security</div>
<div style="position:absolute;left:30.20px;top:603.07px;white-space:pre;font-size:13.5px;font-weight:700;line-height:1;color:#111;transform:scaleX(1.1076);transform-origin:0 0;-webkit-text-stroke:0.35px #111">Translations</div>
<div style="position:absolute;left:482.98px;top:98.15px;white-space:pre;font-size:14px;font-weight:400;line-height:1;color:#000;transform:scaleX(1.0199);transform-origin:0 0;">Main Metadata (saved)</div>
<div style="position:absolute;left:994.40px;top:99.65px;white-space:pre;font-size:14px;font-weight:400;line-height:1;color:#000;transform:scaleX(1.0178);transform-origin:0 0;">Temporary Metadata (not saved)</div>
<div style="position:absolute;left:1564.57px;top:99.65px;white-space:pre;font-size:14px;font-weight:400;line-height:1;color:#000;transform:scaleX(1.0323);transform-origin:0 0;">Metadata Validation Rules</div>
<div style="position:absolute;left:1724.67px;top:1037.14px;white-space:pre;font-size:12px;font-weight:400;line-height:1;color:#fff;transform:scaleX(1.1333);transform-origin:0 0;">ENG</div>
<div style="position:absolute;left:1790.59px;top:1037.14px;white-space:pre;font-size:12px;font-weight:400;line-height:1;color:#fff;transform:scaleX(1.1138);transform-origin:0 0;">14:00</div>
<div style="position:absolute;left:396.04px;top:154.45px;white-space:pre;font-size:14px;font-weight:400;line-height:1;color:#000;transform:scaleX(0.9638);transform-origin:0 0;">Manage OCR Zones</div>
<div style="position:absolute;left:1717.01px;top:154.45px;white-space:pre;font-size:14px;font-weight:400;line-height:1;color:#000;transform:scaleX(0.9915);transform-origin:0 0;">Insert All OMR Fields</div>
<div style="position:absolute;left:407.20px;top:956.65px;white-space:pre;font-size:14px;font-weight:400;line-height:1;color:#000;transform:scaleX(1.0041);transform-origin:0 0;">Reset Metadata</div>
<div style="position:absolute;left:623.36px;top:956.65px;white-space:pre;font-size:14px;font-weight:400;line-height:1;color:#000;transform:scaleX(1.0442);transform-origin:0 0;">Move to Temporary Metadata</div>
<div style="position:absolute;left:929.98px;top:956.65px;white-space:pre;font-size:14px;font-weight:400;line-height:1;color:#000;transform:scaleX(1.0248);transform-origin:0 0;">Copy from another Job</div>
<div style="position:absolute;left:389.15px;top:198.15px;white-space:pre;font-size:14px;font-weight:400;line-height:1;color:#f4f4f4;transform:scaleX(1.0535);transform-origin:0 0;">Sorting</div>
<div style="position:absolute;left:446.71px;top:198.15px;white-space:pre;font-size:14px;font-weight:400;line-height:1;color:#f4f4f4;transform:scaleX(0.9900);transform-origin:0 0;">Field</div>
<div style="position:absolute;left:659.25px;top:198.15px;white-space:pre;font-size:14px;font-weight:400;line-height:1;color:#f4f4f4;transform:scaleX(1.0481);transform-origin:0 0;">Default Type</div>
<div style="position:absolute;left:1020.87px;top:198.15px;white-space:pre;font-size:14px;font-weight:400;line-height:1;color:#f4f4f4;transform:scaleX(1.0256);transform-origin:0 0;">Default Value</div>
<div style="position:absolute;left:1518.80px;top:198.15px;white-space:pre;font-size:14px;font-weight:400;line-height:1;color:#f4f4f4;transform:scaleX(1.0000);transform-origin:0 0;">ReadOnly</div>
<div style="position:absolute;left:1614.15px;top:198.15px;white-space:pre;font-size:14px;font-weight:400;line-height:1;color:#f4f4f4;transform:scaleX(1.0535);transform-origin:0 0;">Hidden</div>
<div style="position:absolute;left:1690.21px;top:198.15px;white-space:pre;font-size:14px;font-weight:400;line-height:1;color:#f4f4f4;transform:scaleX(1.0400);transform-origin:0 0;">Mandatory</div>
<div style="position:absolute;left:1798.79px;top:198.15px;white-space:pre;font-size:14px;font-weight:400;line-height:1;color:#f4f4f4;transform:scaleX(0.9069);transform-origin:0 0;">OCR</div>
<div style="position:absolute;left:431.01px;top:229.65px;white-space:pre;font-size:14px;font-weight:400;line-height:1;color:#1e1e1e;transform:scaleX(0.9700);transform-origin:0 0;">1</div>
<div style="position:absolute;left:450.30px;top:229.65px;white-space:pre;font-size:14px;font-weight:400;line-height:1;color:#1e1e1e;transform:scaleX(0.9700);transform-origin:0 0;">Teacher</div>
<div style="position:absolute;left:659.54px;top:229.65px;white-space:pre;font-size:14px;font-weight:400;line-height:1;color:#1e1e1e;transform:scaleX(0.9630);transform-origin:0 0;">Expression (VBScript)</div>
<div style="position:absolute;left:1020.85px;top:229.65px;white-space:pre;font-size:14px;font-weight:400;line-height:1;color:#1e1e1e;transform:scaleX(0.9488);transform-origin:0 0;">Mid(TeacherOCR, 9)</div>
<div style="position:absolute;left:431.01px;top:265.85px;white-space:pre;font-size:14px;font-weight:400;line-height:1;color:#1e1e1e;transform:scaleX(0.9700);transform-origin:0 0;">2</div>
<div style="position:absolute;left:449.27px;top:265.85px;white-space:pre;font-size:14px;font-weight:400;line-height:1;color:#1e1e1e;transform:scaleX(1.0297);transform-origin:0 0;">Grade</div>
<div style="position:absolute;left:659.54px;top:265.85px;white-space:pre;font-size:14px;font-weight:400;line-height:1;color:#1e1e1e;transform:scaleX(0.9630);transform-origin:0 0;">Expression (VBScript)</div>
<div style="position:absolute;left:1020.85px;top:265.85px;white-space:pre;font-size:14px;font-weight:400;line-height:1;color:#1e1e1e;transform:scaleX(0.9517);transform-origin:0 0;">Mid(GradeOCR, 7)</div>
<div style="position:absolute;left:431.01px;top:302.05px;white-space:pre;font-size:14px;font-weight:400;line-height:1;color:#1e1e1e;transform:scaleX(0.9700);transform-origin:0 0;">3</div>
<div style="position:absolute;left:449.30px;top:302.05px;white-space:pre;font-size:14px;font-weight:400;line-height:1;color:#1e1e1e;transform:scaleX(0.9978);transform-origin:0 0;">Subject</div>
<div style="position:absolute;left:659.54px;top:302.05px;white-space:pre;font-size:14px;font-weight:400;line-height:1;color:#1e1e1e;transform:scaleX(0.9630);transform-origin:0 0;">Expression (VBScript)</div>
<div style="position:absolute;left:1020.83px;top:302.05px;white-space:pre;font-size:14px;font-weight:400;line-height:1;color:#1e1e1e;transform:scaleX(0.9683);transform-origin:0 0;">Mid(SubjectOCR, 9)</div>
<div style="position:absolute;left:430.04px;top:338.25px;white-space:pre;font-size:14px;font-weight:400;line-height:1;color:#1e1e1e;transform:scaleX(0.9700);transform-origin:0 0;">4</div>
<div style="position:absolute;left:449.32px;top:338.25px;white-space:pre;font-size:14px;font-weight:400;line-height:1;color:#1e1e1e;transform:scaleX(0.9793);transform-origin:0 0;">QuizType</div>
<div style="position:absolute;left:659.54px;top:338.25px;white-space:pre;font-size:14px;font-weight:400;line-height:1;color:#1e1e1e;transform:scaleX(0.9630);transform-origin:0 0;">Expression (VBScript)</div>
<div style="position:absolute;left:1020.83px;top:338.25px;white-space:pre;font-size:14px;font-weight:400;line-height:1;color:#1e1e1e;transform:scaleX(0.9650);transform-origin:0 0;">Mid(QuizTypeOCR, 11)</div>
<div style="position:absolute;left:431.01px;top:374.45px;white-space:pre;font-size:14px;font-weight:400;line-height:1;color:#1e1e1e;transform:scaleX(0.9700);transform-origin:0 0;">5</div>
<div style="position:absolute;left:449.28px;top:374.45px;white-space:pre;font-size:14px;font-weight:400;line-height:1;color:#1e1e1e;transform:scaleX(1.0155);transform-origin:0 0;">StudentName</div>
<div style="position:absolute;left:659.47px;top:374.45px;white-space:pre;font-size:14px;font-weight:400;line-height:1;color:#1e1e1e;transform:scaleX(1.0283);transform-origin:0 0;">Custom</div>
<div style="position:absolute;left:431.01px;top:410.65px;white-space:pre;font-size:14px;font-weight:400;line-height:1;color:#1e1e1e;transform:scaleX(0.9700);transform-origin:0 0;">6</div>
<div style="position:absolute;left:449.38px;top:410.65px;white-space:pre;font-size:14px;font-weight:400;line-height:1;color:#1e1e1e;transform:scaleX(0.9176);transform-origin:0 0;">Q1</div>
<div style="position:absolute;left:659.47px;top:410.65px;white-space:pre;font-size:14px;font-weight:400;line-height:1;color:#1e1e1e;transform:scaleX(1.0349);transform-origin:0 0;">Mapped Field</div>
<div style="position:absolute;left:1022.88px;top:410.65px;white-space:pre;font-size:14px;font-weight:400;line-height:1;color:#1e1e1e;transform:scaleX(0.9176);transform-origin:0 0;">Q1</div>
<div style="position:absolute;left:431.01px;top:446.85px;white-space:pre;font-size:14px;font-weight:400;line-height:1;color:#1e1e1e;transform:scaleX(0.9700);transform-origin:0 0;">7</div>
<div style="position:absolute;left:449.28px;top:446.85px;white-space:pre;font-size:14px;font-weight:400;line-height:1;color:#1e1e1e;transform:scaleX(1.0176);transform-origin:0 0;">Q2</div>
<div style="position:absolute;left:659.47px;top:446.85px;white-space:pre;font-size:14px;font-weight:400;line-height:1;color:#1e1e1e;transform:scaleX(1.0349);transform-origin:0 0;">Mapped Field</div>
<div style="position:absolute;left:1022.78px;top:446.85px;white-space:pre;font-size:14px;font-weight:400;line-height:1;color:#1e1e1e;transform:scaleX(1.0176);transform-origin:0 0;">Q2</div>
<div style="position:absolute;left:431.01px;top:483.05px;white-space:pre;font-size:14px;font-weight:400;line-height:1;color:#1e1e1e;transform:scaleX(0.9700);transform-origin:0 0;">8</div>
<div style="position:absolute;left:449.31px;top:483.05px;white-space:pre;font-size:14px;font-weight:400;line-height:1;color:#1e1e1e;transform:scaleX(0.9941);transform-origin:0 0;">Q3</div>
<div style="position:absolute;left:659.47px;top:483.05px;white-space:pre;font-size:14px;font-weight:400;line-height:1;color:#1e1e1e;transform:scaleX(1.0349);transform-origin:0 0;">Mapped Field</div>
<div style="position:absolute;left:1022.81px;top:483.05px;white-space:pre;font-size:14px;font-weight:400;line-height:1;color:#1e1e1e;transform:scaleX(0.9941);transform-origin:0 0;">Q3</div>
<div style="position:absolute;left:431.01px;top:519.25px;white-space:pre;font-size:14px;font-weight:400;line-height:1;color:#1e1e1e;transform:scaleX(0.9700);transform-origin:0 0;">9</div>
<div style="position:absolute;left:449.34px;top:519.25px;white-space:pre;font-size:14px;font-weight:400;line-height:1;color:#1e1e1e;transform:scaleX(0.9611);transform-origin:0 0;">Q4</div>
<div style="position:absolute;left:659.47px;top:519.25px;white-space:pre;font-size:14px;font-weight:400;line-height:1;color:#1e1e1e;transform:scaleX(1.0349);transform-origin:0 0;">Mapped Field</div>
<div style="position:absolute;left:1022.84px;top:519.25px;white-space:pre;font-size:14px;font-weight:400;line-height:1;color:#1e1e1e;transform:scaleX(0.9611);transform-origin:0 0;">Q4</div>
<div style="position:absolute;left:423.25px;top:555.45px;white-space:pre;font-size:14px;font-weight:400;line-height:1;color:#1e1e1e;transform:scaleX(0.9700);transform-origin:0 0;">10</div>
<div style="position:absolute;left:450.30px;top:555.45px;white-space:pre;font-size:14px;font-weight:400;line-height:1;color:#1e1e1e;transform:scaleX(1.0152);transform-origin:0 0;">TotalScore</div>
<div style="position:absolute;left:659.54px;top:555.45px;white-space:pre;font-size:14px;font-weight:400;line-height:1;color:#1e1e1e;transform:scaleX(0.9630);transform-origin:0 0;">Expression (VBScript)</div>
<div style="position:absolute;left:1020.82px;top:555.45px;white-space:pre;font-size:14px;font-weight:400;line-height:1;color:#1e1e1e;transform:scaleX(0.9813);transform-origin:0 0;">Cint(Iif(Len(Q1) &gt; 0, Q1, 0)) + Cint(Iif(Len(Q2) &gt; 0, Q2, 0)) + Cint(Iif(Len(Q3) &gt;</div>
<div style="position:absolute;left:424.22px;top:591.65px;white-space:pre;font-size:14px;font-weight:400;line-height:1;color:#1e1e1e;transform:scaleX(0.9700);transform-origin:0 0;">11</div>
<div style="position:absolute;left:449.31px;top:591.65px;white-space:pre;font-size:14px;font-weight:400;line-height:1;color:#1e1e1e;transform:scaleX(0.9872);transform-origin:0 0;">Result</div>
<div style="position:absolute;left:659.54px;top:591.65px;white-space:pre;font-size:14px;font-weight:400;line-height:1;color:#1e1e1e;transform:scaleX(0.9630);transform-origin:0 0;">Expression (VBScript)</div>
<div style="position:absolute;left:1020.81px;top:591.65px;white-space:pre;font-size:14px;font-weight:400;line-height:1;color:#1e1e1e;transform:scaleX(0.9934);transform-origin:0 0;">Iif(TotalScore &gt;= 50, &quot;Pass&quot;, &quot;Fail&quot;)</div>
</body></html>
